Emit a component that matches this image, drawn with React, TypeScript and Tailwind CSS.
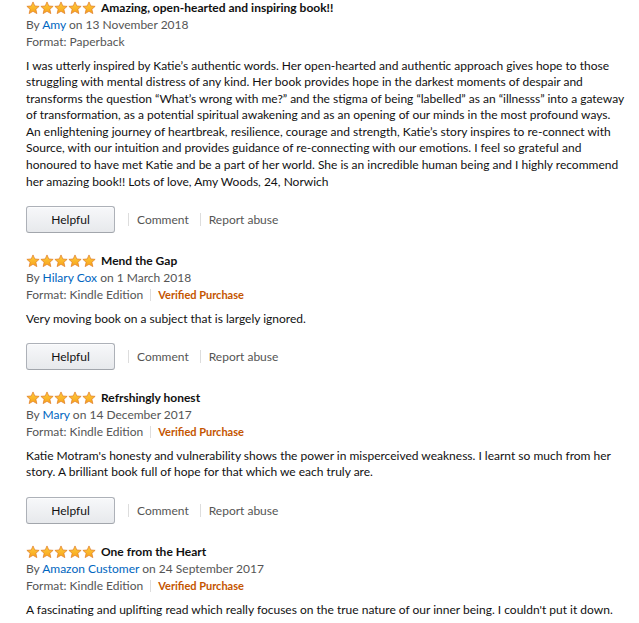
type Review = {
  title: string
  author: string
  date: string
  format: string
  verified: boolean
  body: string
  actions: boolean
}

const reviews: Review[] = [
  {
    title: "Amazing, open-hearted and inspiring book!!",
    author: "Amy",
    date: "13 November 2018",
    format: "Paperback",
    verified: false,
    actions: true,
    body: "I was utterly inspired by Katie\u2019s authentic words. Her open-hearted and authentic approach gives hope to those struggling with mental distress of any kind. Her book provides hope in the darkest moments of despair and transforms the question \u201cWhat\u2019s wrong with me?\u201d and the stigma of being \u201clabelled\u201d as an \u201cillnesss\u201d into a gateway of transformation, as a potential spiritual awakening and as an opening of our minds in the most profound ways. An enlightening journey of heartbreak, resilience, courage and strength, Katie\u2019s story inspires to re-connect with Source, with our intuition and provides guidance of re-connecting with our emotions. I feel so grateful and honoured to have met Katie and be a part of her world. She is an incredible human being and I highly recommend her amazing book!! Lots of love, Amy Woods, 24, Norwich",
  },
  {
    title: "Mend the Gap",
    author: "Hilary Cox",
    date: "1 March 2018",
    format: "Kindle Edition",
    verified: true,
    actions: true,
    body: "Very moving book on a subject that is largely ignored.",
  },
  {
    title: "Refrshingly honest",
    author: "Mary",
    date: "14 December 2017",
    format: "Kindle Edition",
    verified: true,
    actions: true,
    body: "Katie Motram's honesty and vulnerability shows the power in misperceived weakness. I learnt so much from her story. A brilliant book full of hope for that which we each truly are.",
  },
  {
    title: "One from the Heart",
    author: "Amazon Customer",
    date: "24 September 2017",
    format: "Kindle Edition",
    verified: true,
    actions: false,
    body: "A fascinating and uplifting read which really focuses on the true nature of our inner being. I couldn't put it down.",
  },
]

function Star() {
  return (
    <svg width="14" height="14" viewBox="0 0 24 24">
      <defs>
        <linearGradient id="starfill" x1="0" y1="0" x2="0" y2="1">
          <stop offset="0" stopColor="#ffce3d" />
          <stop offset="1" stopColor="#f7a21b" />
        </linearGradient>
      </defs>
      <path
        d="M12 1.6l3.1 6.9 7.4.7-5.6 5 1.7 7.4L12 17.7l-6.6 3.9 1.7-7.4-5.6-5 7.4-.7z"
        fill="url(#starfill)"
        stroke="#de7921"
        strokeWidth="1.2"
        strokeLinejoin="round"
      />
    </svg>
  )
}

function ReviewItem({ review }: { review: Review }) {
  return (
    <div className="flex flex-col">
      <div className="flex h-[16px] items-center">
        <div className="flex w-[70px]">
          {[0, 1, 2, 3, 4].map((i) => (
            <Star key={i} />
          ))}
        </div>
        <span className="ml-[5px] font-bold text-[#111]">{review.title}</span>
      </div>
      <div className="h-[17px] leading-[17px] text-[#555]">
        By <span className="text-[#0066c0]">{review.author}</span> on {review.date}
      </div>
      <div className="flex h-[17px] items-center leading-[17px] text-[#555]">
        <span>Format: {review.format}</span>
        {review.verified ? (
          <>
            <span className="mx-[7px] h-[12px] w-px bg-[#ddd]" />
            <span className="text-[11px] font-bold text-[#c45500]">Verified Purchase</span>
          </>
        ) : null}
      </div>
      <p className="mt-[7.5px] leading-[16.6px] text-[#111]">{review.body}</p>
      {review.actions ? (
        <div className="mt-[16px] flex items-center">
          <button
            type="button"
            className="h-[27px] w-[89px] shrink-0 rounded-[3px] border border-[#adb1b8] border-b-[#a2a6ac] bg-gradient-to-b from-[#f7f8fa] to-[#e7e9ec] text-[#111] shadow-[inset_0_1px_0_rgba(255,255,255,0.6)]"
          >
            Helpful
          </button>
          <span className="ml-[13px] h-[13px] w-px bg-[#ddd]" />
          <span className="ml-[8px] text-[#555]">Comment</span>
          <span className="ml-[11px] h-[13px] w-px bg-[#ddd]" />
          <span className="ml-[8px] text-[#555]">Report abuse</span>
        </div>
      ) : null}
    </div>
  )
}

export default function App() {
  return (
    <div className="h-[623px] w-[639px] overflow-hidden bg-white pl-[26px] text-[12px] [font-family:Lato,'Liberation_Sans',sans-serif]">
      <div className="flex w-[601px] flex-col gap-[20px]">
        {reviews.map((r) => (
          <ReviewItem key={r.title} review={r} />
        ))}
      </div>
    </div>
  )
}
